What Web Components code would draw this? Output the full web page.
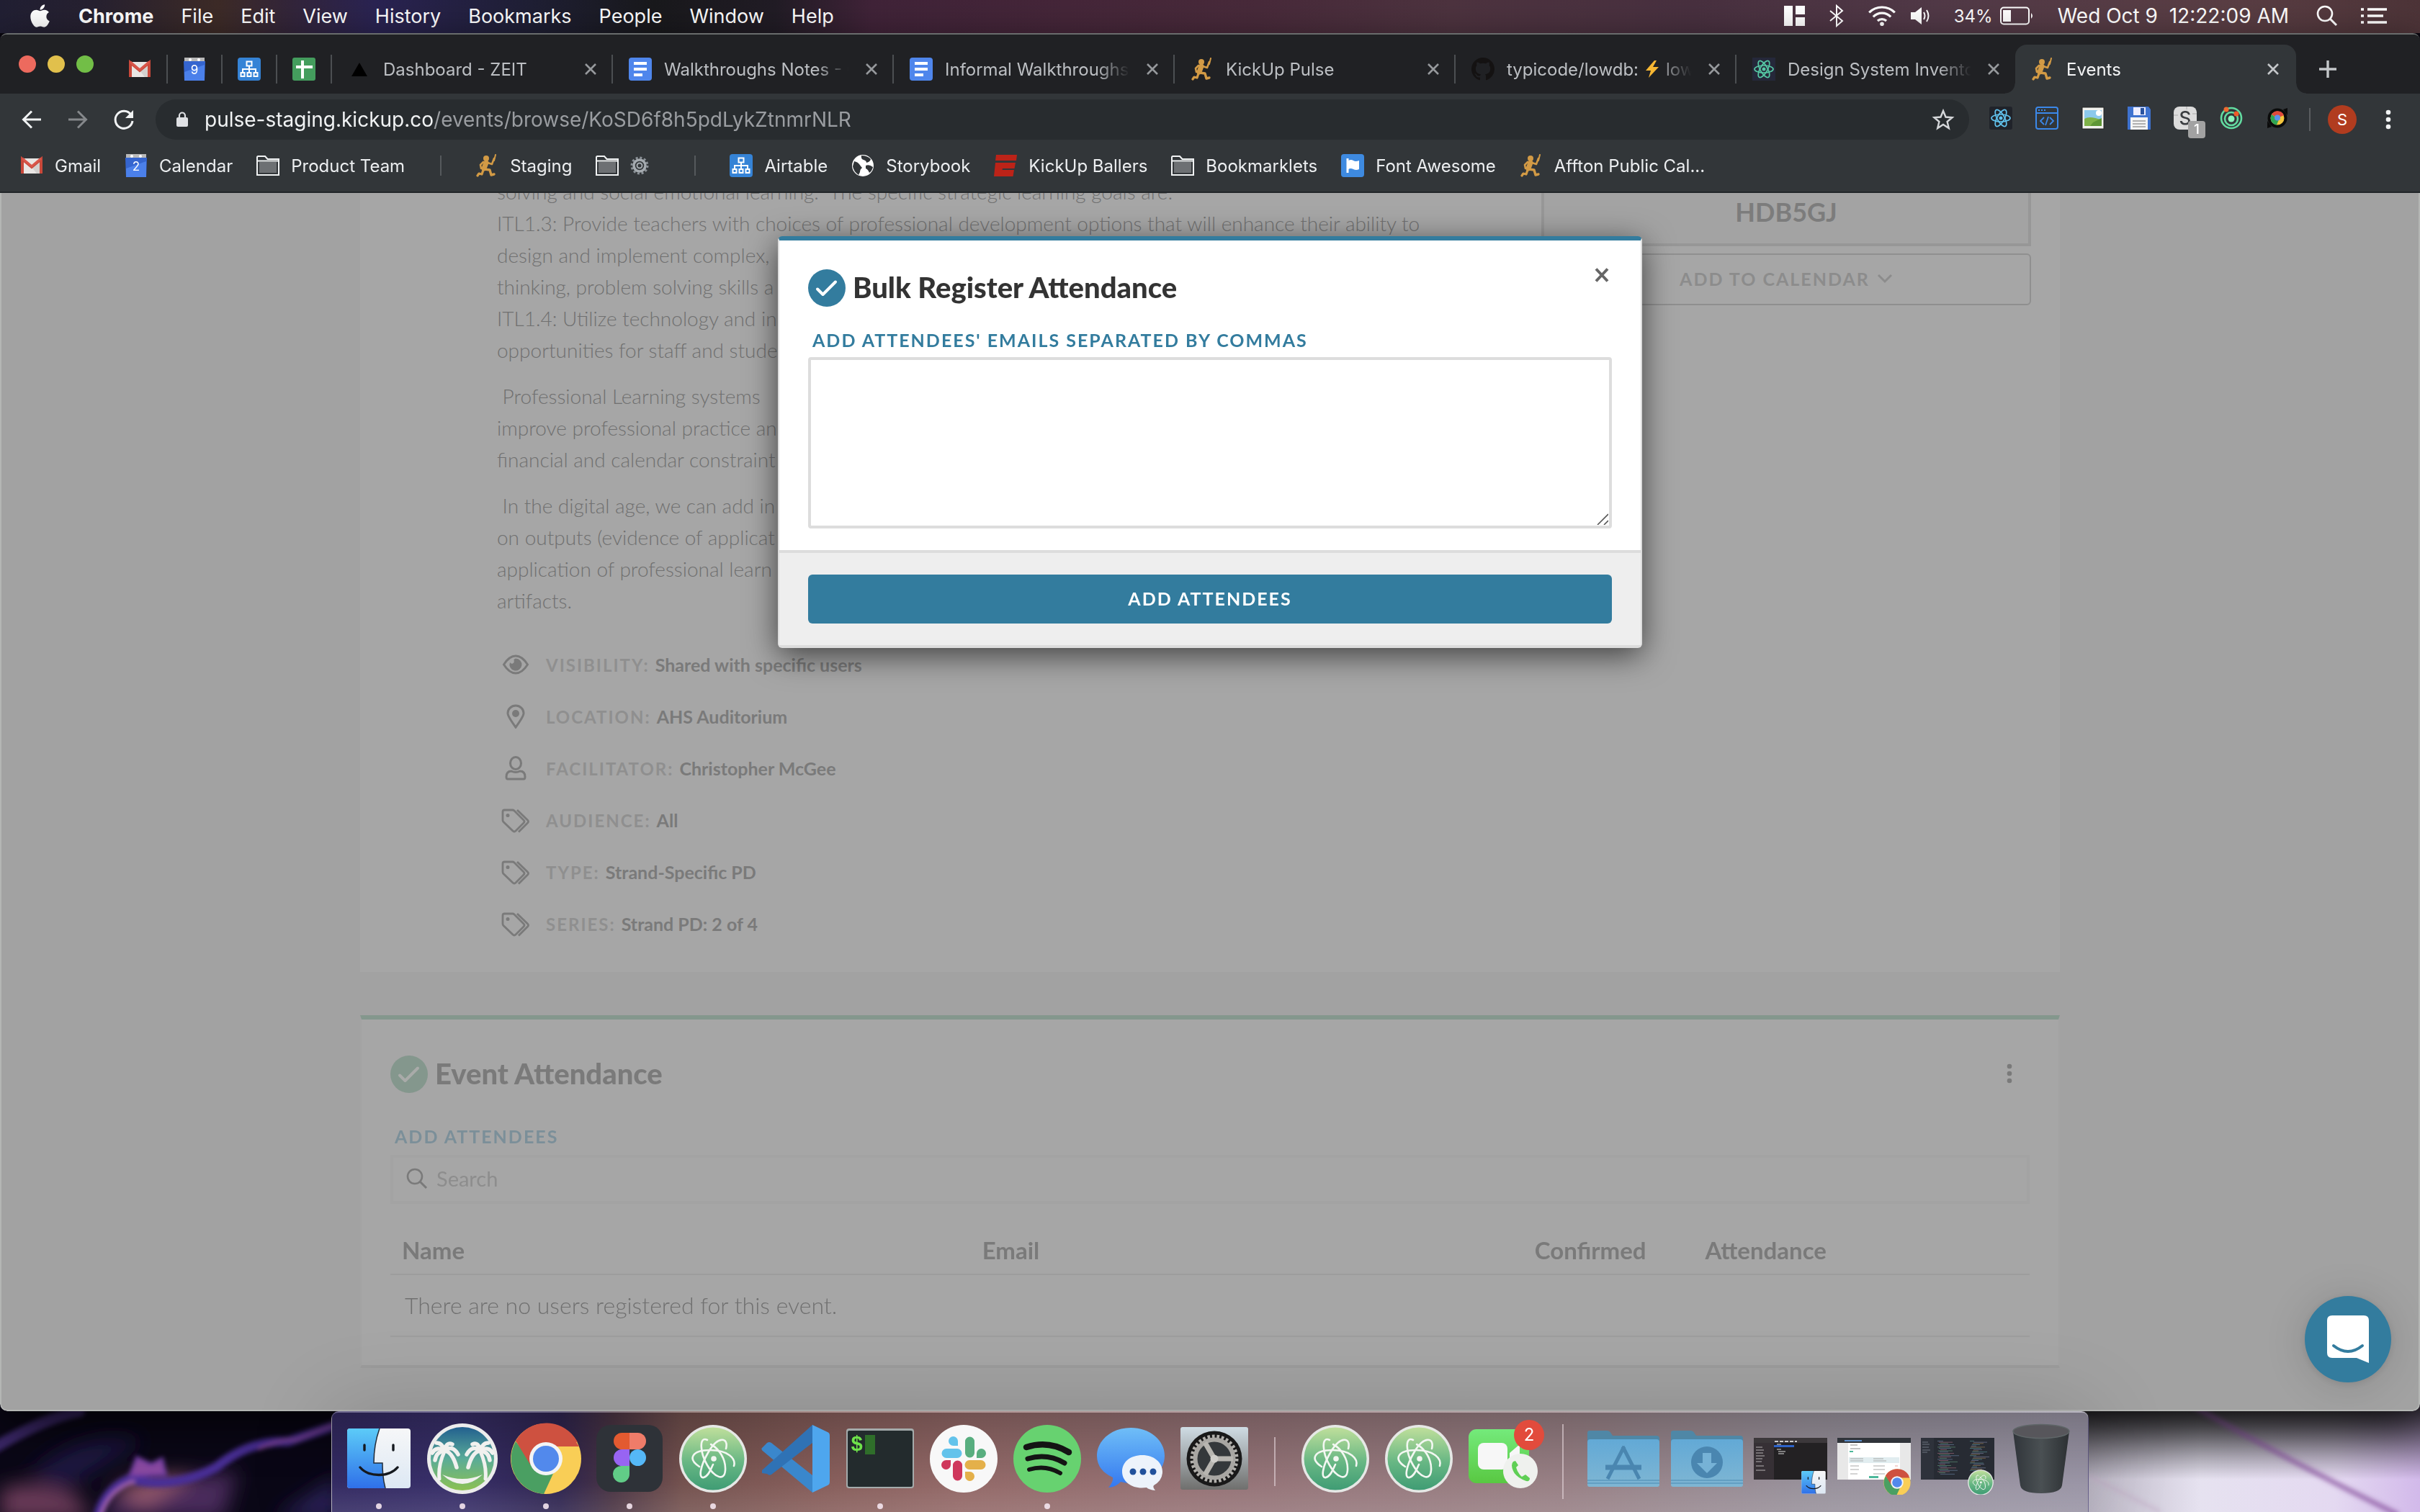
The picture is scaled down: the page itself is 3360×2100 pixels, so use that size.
<!DOCTYPE html>
<html lang="en">
<head>
<meta charset="utf-8">
<title>Events</title>
<style>
  html, body { margin: 0; height: 100%; }
  body { background: #08060f; overflow: hidden; font-family: Inter, "Liberation Sans", sans-serif; }
</style>
</head>
<body>
<desktop-screen></desktop-screen>
<script>
const chromeLogo = `<circle cx="50" cy="50" r="49" fill="#f9ce56"/><path d="M50 50 8 26A49 49 0 0 1 92 27L96 33H50Z" fill="#ce5140"/><path d="M8 26A49 49 0 0 0 47 99L64 62 50 50 30 54Z" fill="#4a9f62"/><path d="M50 27H94A49 49 0 0 0 8 25L28 58Z" fill="#ce5140"/><circle cx="50" cy="50" r="23" fill="#f3f4f5"/><circle cx="50" cy="50" r="18" fill="#5289ec"/>`;
const atomLogo = `<defs><linearGradient id="at" x1="0" y1="0" x2="0" y2="1"><stop offset="0" stop-color="#bfdf9b"/><stop offset=".55" stop-color="#68b784"/><stop offset="1" stop-color="#3f9c74"/></linearGradient></defs><circle cx="50" cy="50" r="47" fill="#e6e8e6"/><circle cx="50" cy="50" r="43.500" fill="url(#at)"/><g fill="none" stroke="#f3f7f2" stroke-width="2.600" stroke-linecap="round"><path d="M31 61C14 50 21 38 46 38S82 50 79 60"/><path d="M42 24C30 18 32 42 42 59S66 82 67 66 58 36 47 30"/><path d="M68 36C72 20 57 18 44 40S30 78 37 76 47 64 50 58"/></g><circle cx="51" cy="50" r="3.800" fill="#f3f7f2"/>`;
const finderLogo = `<defs><linearGradient id="fa" x1="0" y1="0" x2="0" y2="1"><stop offset="0" stop-color="#5ccbf8"/><stop offset="1" stop-color="#2f70e9"/></linearGradient><linearGradient id="fb" x1="0" y1="0" x2="0" y2="1"><stop offset="0" stop-color="#f6f7f8"/><stop offset="1" stop-color="#dde8f4"/></linearGradient></defs><rect x="6" y="8" width="88" height="83" rx="4" fill="url(#fb)"/><path d="M10 8H51C46 22 43 40 43 56H55C55 70 56 80 59 91H10a4 4 0 0 1-4-4V12a4 4 0 0 1 4-4Z" fill="url(#fa)"/><path d="M51 8C46 22 43 40 43 56H55C55 70 56 80 59 91M30 31v6M70 31v6" fill="none" stroke="#222d3a" stroke-width="1.500"/><path d="M30 31v7M70 31v7M24 62C36 76 64 76 76 62" fill="none" stroke="#15191f" stroke-width="3.400" stroke-linecap="round"/>`;
const reactShape = c => `<g fill="none" stroke="${c}" stroke-width="1.700"><ellipse cx="16" cy="16" rx="13" ry="5"/><ellipse cx="16" cy="16" rx="13" ry="5" transform="rotate(60 16 16)"/><ellipse cx="16" cy="16" rx="13" ry="5" transform="rotate(120 16 16)"/></g><circle cx="16" cy="16" r="2.500" fill="${c}"/>`;
const calendarShape = n => `<rect x="1" y="0" width="28" height="7" fill="#b9b9b9"/><circle cx="9" cy="3" r="2" fill="#fff"/><circle cx="21" cy="3" r="2" fill="#fff"/><path d="M0 5H30L29 32H1Z" fill="#3565cf"/><path d="M1 20 29 10V32H1Z" fill="#4b80ea"/><text x="15" y="23" font-size="17" fill="#fff" text-anchor="middle" font-family="Inter, sans-serif">${n}</text>`;
const folderShape = `<path d="M1 5V3.500Q1 2 2.500 2H12L15.500 6H31V28H1Z" fill="none" stroke="#f1f3f4" stroke-width="2"/><rect x="4" y="10" width="24" height="15" fill="#6d7073"/><path d="M1 8.500H31" stroke="#f1f3f4" stroke-width="2"/>`;
const runnerShape = `<g fill="none" stroke="#d29a45" stroke-linecap="round" stroke-linejoin="round"><path d="M15 12 12 20" stroke-width="7"/><path d="M17 12 23 14 26 6" stroke-width="2.600"/><path d="M26 9 28 1" stroke-width="2"/><path d="M11 11 7 15 8 20" stroke-width="2.600"/><path d="M13 21 20 22 22 29 26 28" stroke-width="3.400"/><path d="M11 22 9 28 5 27 3 30" stroke-width="3.200"/></g><circle cx="15" cy="6" r="4" fill="#d29a45"/>`;
const treeShape = `<rect width="32" height="32" rx="4" fill="#3583d6"/><g fill="none" stroke="#fff" stroke-width="2"><rect x="12.500" y="5.500" width="7" height="6"/><path d="M16 12V20M7 21V16H25V21"/><rect x="4.500" y="21" width="5" height="5"/><rect x="13.500" y="21" width="5" height="5"/><rect x="22.500" y="21" width="5" height="5"/></g>`;
const docShape = `<rect width="32" height="32" rx="4" fill="#4f86ec"/><path d="M7 8H25M7 16H25M7 24H19" stroke="#fff" stroke-width="4"/>`;
const gmailShape = `<path d="M2 6H28V27H2Z" fill="#e9e6e4"/><path d="M15 18 28 7V27H22Z" fill="#d3d0ce"/><path d="M2 27V7L15 18 28 7V27" fill="none" stroke="#c9483a" stroke-width="4"/><path d="M2 6 15 17 28 6" fill="none" stroke="#d9564a" stroke-width="3"/>`;
const folderBig = g => `<defs><linearGradient id="fo" x1="0" y1="0" x2="0" y2="1"><stop offset="0" stop-color="#62a9d6"/><stop offset="1" stop-color="#7fb6d3"/></linearGradient></defs><path d="M0 14Q0 11 3 11H27Q31 11 33 15L35 18H96Q100 18 100 22V40H0Z" fill="#4f87a6"/><path d="M0 27Q0 23 4 23H96Q100 23 100 27V86Q100 89 97 89H3Q0 89 0 86Z" fill="url(#fo)"/><path d="M0 80H100M0 84H100" stroke="#5b98bd" stroke-width="1.500"/>${g}`;
const tagShape = `<path d="M3 6.500Q3 4 5.500 4H16.500Q18 4 19 5L32 18Q34 20 32 22L21 33Q19 35 17 33L4 20.500Q3 19.500 3 18Z"/><path d="M23 4 37.500 18Q39.500 20 37.500 22L25 34.500"/><circle cx="10" cy="11.500" r="2.500" fill="currentColor" stroke="none"/>`;
const checkDisc = `<circle cx="26" cy="26" r="26" fill="currentColor"/><path d="M13 27.500 20.500 35 38 17.500" fill="none" stroke="var(--tick, #fff)" stroke-width="4" stroke-linecap="round" stroke-linejoin="round"/>`;
const crossShape = `<path d="M2 2 16 16M16 2 2 16" stroke="currentColor" stroke-width="2.600" fill="none"/>`;
const codeLines = (() => { let s = ''; for (let r = 0; r < 28; r++) { const y = 25 + r * 1.7; s += `<rect x="${23 + (r * 7) % 5}" y="${y}" width="${8 + (r * 11) % 19}" height=".8" fill="${['#5b6f8a', '#8a5c6c', '#56806b'][r % 3]}"/><rect x="${68 + (r * 5) % 6}" y="${y}" width="${6 + (r * 13) % 17}" height=".8" fill="${['#4f7d84', '#6b6f8a', '#86704f'][r % 3]}"/>`; } return s; })();

/* name: [viewBox width, viewBox height, content] */
const ICONS = {
  apple: [384, 512, `<path fill="#fff" d="M318.7 268.7c-.2-36.7 16.4-64.4 50-84.8-18.8-26.9-47.2-41.7-84.7-44.6-35.5-2.8-74.3 20.7-88.5 20.7-15 0-49.4-19.7-76.4-19.7C63.3 141.200 4 184.800 4 273.500q0 39.300 14.400 81.200c12.800 36.700 59 126.700 107.200 125.200 25.200-.6 43-17.900 75.800-17.900 31.800 0 48.300 17.900 76.400 17.900 48.600-.7 90.400-82.500 102.600-119.300-65.200-30.700-61.700-90-61.700-91.900zm-56.600-164.200c27.300-32.400 24.800-61.900 24-72.500-24.100 1.400-52 16.400-67.900 34.900-17.500 19.800-27.800 44.300-25.600 71.900 26.100 2 49.900-11.400 69.500-34.300z"/>`],
  magnet: [30, 28, `<path fill="#fff" d="M0 0H12V28H0ZM16 0H29V12H16ZM16 16H29V28H16Z"/>`],
  bluetooth: [22, 32, `<path d="M2 9 19 23 11 30V2L19 9 2 23" fill="none" stroke="#fff" stroke-width="2"/>`],
  wifi: [42, 32, `<g fill="none" stroke="#fff" stroke-width="3.400"><path d="M2 11A27 27 0 0 1 40 11"/><path d="M8 17.500A18 18 0 0 1 34 17.500"/><path d="M14.500 23.500A9.500 9.500 0 0 1 27.500 23.500"/></g><circle cx="21" cy="28" r="3" fill="#fff"/>`],
  speaker: [28, 28, `<path d="M0 9H6L15 2V26L6 19H0Z" fill="#fff"/><path d="M18 9Q21 14 18 19M22 6Q27 14 22 22" fill="none" stroke="#fff" stroke-width="2"/>`],
  battery: [48, 26, `<rect x="1" y="1.500" width="39" height="23" rx="4" fill="none" stroke="#fff" stroke-width="2"/><rect x="4" y="5" width="11" height="16" fill="#fff"/><path d="M43 9Q47 13 43 17Z" fill="#fff"/>`],
  lens: [30, 30, `<circle cx="12" cy="12" r="10" fill="none" stroke="currentColor" stroke-width="2.600"/><path d="M19 19 28 28" stroke="currentColor" stroke-width="3"/>`],
  list: [36, 22, `<path d="M0 2H4M0 11H4M0 20H4M9 2H36M9 11H31M9 20H36" stroke="#fff" stroke-width="3.600"/>`],
  gmail: [30, 32, gmailShape], cal9: [30, 32, calendarShape(9)], cal2: [30, 32, calendarShape(2)],
  tree: [32, 32, treeShape],
  sheet: [32, 32, `<rect width="32" height="32" rx="3" fill="#449d5d"/><path d="M14 4V29M5 13H28" stroke="#fff" stroke-width="4"/>`],
  zeit: [32, 32, `<path d="M16 7 27 26H5Z" fill="#000"/>`],
  doc: [32, 32, docShape], runner: [32, 32, runnerShape],
  github: [16, 16, `<path fill="#141212" fill-rule="evenodd" d="M8 0C3.580 0 0 3.580 0 8c0 3.540 2.290 6.530 5.470 7.590.4.07.55-.17.55-.38 0-.19-.01-.82-.01-1.490-2.010.37-2.530-.49-2.690-.94-.09-.23-.48-.94-.82-1.130-.28-.15-.68-.52-.01-.53.63-.01 1.080.58 1.230.82.72 1.210 1.870.87 2.330.66.07-.52.28-.87.51-1.070-1.780-.2-3.640-.89-3.640-3.950 0-.87.31-1.590.82-2.150-.08-.2-.36-1.020.08-2.120 0 0 .67-.21 2.200.82.64-.18 1.320-.27 2-.27s1.360.09 2 .27c1.530-1.040 2.200-.82 2.200-.82.44 1.100.16 1.920.08 2.120.51.56.82 1.270.82 2.150 0 3.070-1.870 3.750-3.650 3.950.29.25.54.73.54 1.480 0 1.070-.01 1.930-.01 2.200 0 .21.15.46.55.38A8.010 8.010 0 0 0 16 8c0-4.420-3.580-8-8-8z"/>`],
  bolt: [18, 24, `<path d="M12 0 0 14H7L4 24 18 9H10L15 0Z" fill="#f7b733"/>`],
  reactGreen: [32, 32, `<rect width="32" height="32" fill="#25283a"/>${reactShape('#56c9a5')}`],
  reactBlue: [32, 32, `<rect width="32" height="32" rx="3" fill="#20232a"/>${reactShape('#61c3ee')}`],
  cross: [18, 18, crossShape],
  dismiss: [20, 20, `<path d="M2 1.500 18 18.500M18 1.500 2 18.500" stroke="currentColor" stroke-width="4" fill="none"/>`],
  plus: [26, 26, `<path d="M13 1V25M1 13H25" stroke="#c4c7ca" stroke-width="3.400"/>`],
  back: [32, 32, `<path d="M29 16H5M16 4.500 4.500 16 16 27.500" fill="none" stroke="currentColor" stroke-width="3"/>`],
  forward: [32, 32, `<path d="M3 16H27M16 4.500 27.500 16 16 27.500" fill="none" stroke="currentColor" stroke-width="3"/>`],
  reload: [32, 32, `<path d="M26 9.500A12 12 0 1 0 28 18" fill="none" stroke="#f1f3f4" stroke-width="3"/><path d="M29 3V14H18Z" fill="#f1f3f4"/>`],
  lock: [18, 22, `<rect x="1" y="8" width="16" height="13" rx="2" fill="#dfe1e4"/><path d="M5 9V5.500A4 4 0 0 1 13 5.500V9" fill="none" stroke="#dfe1e4" stroke-width="2.200"/>`],
  star: [32, 32, `<path d="M16 4 19.500 12.500 28.500 13.200 21.600 19 23.800 28 16 23 8.200 28 10.400 19 3.500 13.200 12.500 12.500Z" fill="none" stroke="#d5d7da" stroke-width="2.400"/>`],
  devwin: [32, 32, `<rect x="1" y="1" width="30" height="30" rx="3" fill="none" stroke="#3b88ea" stroke-width="2"/><path d="M1 9H31M4 5H6M8 5H10M12 5H14M12 15 7 20 12 25M20 15 25 20 20 25M18 14 14 26" fill="none" stroke="#3b88ea" stroke-width="1.800"/>`],
  photo: [32, 32, `<rect x="1" y="1" width="30" height="30" fill="#f2f2ee" stroke="#222"/><rect x="4" y="5" width="24" height="22" fill="#8cc9ec"/><path d="M4 17Q12 12 28 19V27H4Z" fill="#7fb249"/><path d="M16 22 28 16V27H12Z" fill="#5e9636"/><circle cx="24" cy="9" r="4" fill="#fff"/>`],
  floppy: [32, 32, `<path d="M0 0H29L32 4V32H0Z" fill="#3e72cf"/><rect x="8" y="1" width="17" height="11" fill="#eef"/><rect x="18" y="2" width="5" height="9" fill="#2852a0"/><rect x="4" y="15" width="24" height="17" fill="#f4f4f4"/><path d="M7 20H25M7 24H25M7 28H25" stroke="#999" stroke-width="1.600"/>`],
  pageS: [32, 32, `<rect width="32" height="32" rx="8" fill="#dcdcdc"/><path d="M0 12H6M26 10H32M18 0V4" stroke="#aaa"/><text x="16" y="25" text-anchor="middle" font-size="26" font-weight="500" font-family="Inter, sans-serif" fill="#3a3d40">S</text>`],
  orbit: [32, 32, `<g fill="none" stroke="#62dba0" stroke-width="2.600"><circle cx="16" cy="16" r="14"/><circle cx="16" cy="17" r="9"/></g><circle cx="16" cy="17" r="4.500" fill="#8af5bd"/><circle cx="9" cy="4" r="3.500" fill="#ee6a30"/><circle cx="23" cy="10" r="3.500" fill="#ee5a28"/>`],
  chromeSync: [32, 32, `<circle cx="16" cy="16" r="13.500" fill="#0b0b0b"/><path d="M24 4 30 2V12ZM8 28 2 30V20Z" fill="#0b0b0b"/><circle cx="16" cy="16" r="9.500" fill="#f4c63d"/><path d="M16 16 8 11A9.500 9.500 0 0 1 25 12Z" fill="#df4a3c"/><path d="M8 11A9.500 9.500 0 0 0 15 25.500L18 18Z" fill="#2fa653"/><circle cx="16" cy="15.500" r="4" fill="#5b92ec"/>`],
  dots: [8, 32, `<g fill="currentColor"><circle cx="4" cy="6" r="3.300"/><circle cx="4" cy="16" r="3.300"/><circle cx="4" cy="26" r="3.300"/></g>`],
  folder: [32, 30, folderShape],
  gear: [26, 26, `<circle cx="13" cy="13" r="11" fill="none" stroke="#8b9197" stroke-width="3" stroke-dasharray="3 2.760"/><circle cx="13" cy="13" r="8" fill="none" stroke="#a5abb0" stroke-width="3.500"/><circle cx="13" cy="13" r="3.500" fill="none" stroke="#a5abb0" stroke-width="2"/>`],
  rule: [32, 32, `<path d="M17 2V30" stroke="#55595c" stroke-width="2"/>`],
  globe: [32, 32, `<circle cx="16" cy="16" r="15" fill="#fff"/><path d="M4 10Q9 11 11 14T15 19Q12 21 12 25L10 29Q3 24 2 17Z" fill="#303437"/><path d="M14 2Q13 7 17 8T21 12Q26 11 27 7Q22 2 14 2ZM20 16Q25 14 30 18Q29 23 25 26Q23 21 20 20Z" fill="#303437"/>`],
  espn: [32, 32, `<path d="M3 1H32L31 9H2ZM2 12H30L28.500 20H12L11.500 22H28L26.500 31H0Z" fill="#bc2318"/>`],
  flag: [32, 32, `<rect width="32" height="32" rx="4" fill="#3e8ae0"/><path d="M9 6V26" stroke="#fff" stroke-width="3"/><path d="M10 9Q14 7 17 9T25 9V21Q21 23 17 21T10 21Z" fill="#fff"/>`],
  eye: [38, 28, `<g fill="none" stroke="currentColor" stroke-width="3"><path d="M2.500 14Q10 2 19 2T35.500 14Q28 26 19 26T2.500 14Z"/></g><path d="M19 5.500A8.500 8.500 0 1 1 11 11Q12.500 13.500 15 12.500T16.500 7Q17 6 19 5.500Z" fill="currentColor"/>`],
  pin: [26, 34, `<path d="M13 32Q2 17 2 12.500A11 10.500 0 0 1 24 12.500Q24 17 13 32Z" fill="none" stroke="currentColor" stroke-width="3"/><circle cx="13" cy="13" r="5" fill="currentColor"/>`],
  person: [30, 34, `<g fill="none" stroke="currentColor" stroke-width="3"><ellipse cx="15" cy="10" rx="7.500" ry="8.500"/><path d="M2 29Q2 21 9 21Q15 24 21 21Q28 21 28 29Q28 32 26 32H4Q2 32 2 29Z"/></g>`],
  tags: [42, 36, `<g fill="none" stroke="currentColor" stroke-width="2.800">${tagShape}</g>`],
  disc: [52, 52, checkDisc],
  chevron: [22, 14, `<path d="M2 2 11 11 20 2" fill="none" stroke="currentColor" stroke-width="3"/>`],
  grip: [16, 16, `<path d="M1 16 16 1M10 16 16 10" stroke="#555" stroke-width="1.600"/>`],
  chat: [58, 66, `<path d="M7 0H51Q58 0 58 7V66L41 59H7Q0 59 0 52V7Q0 0 7 0Z" fill="#fff"/><path d="M9 42Q29 58 49 42" fill="none" stroke="#337c9e" stroke-width="4" stroke-linecap="round"/>`],
  finder: [100, 100, finderLogo],
  palms: [100, 100, `<defs><linearGradient id="pl" x1="0" y1="0" x2="0" y2="1"><stop offset="0" stop-color="#22608f"/><stop offset=".5" stop-color="#5aab98"/><stop offset="1" stop-color="#8cc152"/></linearGradient></defs><circle cx="50" cy="50" r="49" fill="#ececec"/><circle cx="50" cy="50" r="44" fill="url(#pl)"/><g fill="none" stroke="#f1f1ef" stroke-linecap="round"><path d="M25 40Q16 60 18 78M75 40Q84 60 82 78" stroke-width="5"/><path d="M25 39Q14 32 8 42M25 39Q14 40 12 52M25 39Q22 28 14 28M25 39Q36 30 44 44M25 39Q36 40 42 62M25 39Q28 26 36 30M75 39Q86 32 92 42M75 39Q86 40 88 52M75 39Q78 28 86 28M75 39Q64 30 56 44M75 39Q64 40 58 62M75 39Q72 26 64 30" stroke-width="5.500"/></g><path d="M22 72Q50 98 78 72Q50 84 22 72Z" fill="#f1f1ef"/>`],
  chrome: [100, 100, chromeLogo],
  figma: [100, 100, `<rect x="4" y="3" width="92" height="93" rx="20" fill="#2e3238"/><path d="M39.500 14H50V37H39.500a11.500 11.500 0 0 1 0-23Z" fill="#e35a30"/><path d="M50 14H61.500a11.500 11.500 0 0 1 0 23H50Z" fill="#ef7c69"/><path d="M39.500 37H50V60H39.500a11.500 11.500 0 0 1 0-23Z" fill="#9864f2"/><circle cx="61.500" cy="48.500" r="11.500" fill="#55b8f7"/><path d="M39.500 60H50V71.500A11.500 11.500 0 1 1 39.500 60Z" fill="#61cc87"/>`],
  atom: [100, 100, atomLogo],
  vscode: [100, 100, `<path d="M2 35 9 28Q12 26 15 28L72 73V97L4 40Q0 37 2 35Z" fill="#3a87cc"/><path d="M2 66 72 3V28L15 72Q12 74 9 71L2 70Z" fill="#2f72b5"/><path d="M72 3 93 13Q96 14 96 18V82Q96 86 93 87L72 97V3Z" fill="#4ea6ee"/>`],
  terminal: [100, 100, `<rect x="3" y="8" width="94" height="83" rx="4" fill="#a4abab"/><rect x="5" y="11" width="90" height="78" rx="2" fill="#232b2d"/><text x="9" y="39" font-size="29" font-weight="700" font-family="'Liberation Mono', monospace" fill="#6ee34a">$</text><rect x="29" y="17" width="14" height="27" fill="#2f6e2a"/>`],
  slack: [100, 100, `<circle cx="50" cy="50" r="47" fill="#f8f8f8"/><path d="M42 32H35.500a6.500 6.500 0 1 1 6.500-6.500ZM26 36H41a6.500 6.500 0 0 1 0 13H26a6.500 6.500 0 0 1 0-13Z" fill="#63c3eb"/><path d="M52 26a6.500 6.500 0 0 1 13 0V42a6.500 6.500 0 0 1-13 0ZM68 49V42.500a6.500 6.500 0 1 1 6.500 6.500Z" fill="#58ae7f"/><path d="M58 52H74a6.500 6.500 0 0 1 0 13H58a6.500 6.500 0 0 1 0-13ZM52 68H58.500a6.500 6.500 0 1 1-6.500 6.500Z" fill="#e4b04a"/><path d="M35 59a6.500 6.500 0 0 1 13 0V74a6.500 6.500 0 0 1-13 0ZM32 52V58.500a6.500 6.500 0 1 1-6.500-6.500Z" fill="#cf375c"/>`],
  spotify: [100, 100, `<circle cx="50" cy="50" r="47" fill="#67d270"/><g fill="none" stroke="#141414" stroke-linecap="round"><path d="M21 34Q52 24 80 41" stroke-width="8.500"/><path d="M23 50Q50 42 74 56" stroke-width="7"/><path d="M25 65Q48 58 68 70" stroke-width="6"/></g>`],
  messages: [100, 100, `<defs><linearGradient id="ms" x1="0" y1="0" x2="0" y2="1"><stop offset="0" stop-color="#6fbef7"/><stop offset="1" stop-color="#3478f0"/></linearGradient></defs><path d="M50 7C76 7 97 24 97 46S76 84 50 84Q42 84 36 82Q30 89 19 90Q26 82 25 76Q3 66 3 46C3 24 24 7 50 7Z" fill="url(#ms)"/><path d="M66 45C82 45 94 55 94 68Q94 80 82 87Q80 90 84 94Q75 93 72 90C52 93 38 82 38 68S50 45 66 45Z" fill="#edf3fb"/><g fill="#21519c"><circle cx="53" cy="68" r="4.500"/><circle cx="67" cy="68" r="4.500"/><circle cx="81" cy="68" r="4.500"/></g>`],
  prefs: [100, 100, `<defs><linearGradient id="pf" x1="0" y1="0" x2="0" y2="1"><stop offset="0" stop-color="#cfdce4"/><stop offset="1" stop-color="#6f6f6d"/></linearGradient></defs><rect x="3" y="6" width="94" height="87" rx="3" fill="url(#pf)"/><circle cx="50" cy="50" r="38.500" fill="#191919"/><circle cx="50" cy="50" r="31" fill="none" stroke="#b2b0ac" stroke-width="5" stroke-dasharray="3.600 2.890"/><circle cx="50" cy="50" r="26.500" fill="#34383b" stroke="#a8a6a2" stroke-width="6"/><path d="M50 50H76M50 50 37 27.500M50 50 37 72.500" stroke="#b7b5b0" stroke-width="7"/><circle cx="50" cy="50" r="5.500" fill="#cfcdc9"/>`],
  facetime: [100, 100, `<defs><linearGradient id="ft" x1="0" y1="0" x2="0" y2="1"><stop offset="0" stop-color="#74ea7b"/><stop offset="1" stop-color="#59c842"/></linearGradient></defs><rect x="3" y="9" width="84" height="75" rx="11" fill="url(#ft)"/><rect x="16" y="28" width="41" height="37" rx="8" fill="#f7f7f7"/><path d="M60 42 74 30V64L60 52Z" fill="#f7f7f7"/><circle cx="75" cy="67" r="24" fill="#eff1ee"/><path d="M65 54Q61 58 65 67T83 81Q88 82 88 77L82 72 77 75Q71 70 69 62L72 59 68 53Z" fill="#5fcf55"/>`],
  folderApps: [100, 100, folderBig(`<g stroke="#4a86b0" fill="none"><path d="M51 33 28 78M49 33 72 78" stroke-width="5"/><path d="M25 62H75" stroke-width="7"/></g>`)],
  folderDown: [100, 100, folderBig(`<circle cx="50" cy="55" r="22" fill="#4a86b0"/><path d="M44 42H56V56H64L50 70 36 56H44Z" fill="#76b2d6"/>`)],
  thumbFinder: [102, 100, `<rect y="21" width="102" height="58" fill="#232123"/><rect y="21" width="28" height="58" fill="#363035"/><rect y="21" width="102" height="7" fill="#3c383b"/><path d="M29 26H60" stroke="#ccc" stroke-width="2" stroke-dasharray="5 2"/><path d="M3 34H12M3 38H14M3 42H13M3 46H15M3 50H12M3 54H11M3 60H14M3 66H16" stroke="#b5b1b4"/><rect x="28" y="31" width="28" height="3" fill="#2e63c9"/><path d="M32 30H38M32 37H38M34 40H44M34 43H42" stroke="#ddd"/><g transform="translate(64 64) scale(.38)">${finderLogo}</g>`],
  thumbChrome: [102, 100, `<rect y="21" width="102" height="58" fill="#e8e8e8"/><rect y="21" width="102" height="7" fill="#30343a"/><path d="M10 25H34" stroke="#5b8dc9" stroke-width="2"/><rect x="15" y="28" width="72" height="51" fill="#fff"/><path d="M18 31H28M18 36H32" stroke="#888"/><rect x="17" y="39" width="5" height="2" fill="#4db89b"/><rect x="16" y="48" width="70" height="8" fill="#e1edf0"/><path d="M18 50H36M50 50H64M18 53H36M50 53H68M18 60H30M50 60H66M18 65H30M50 65H66M18 71H28M50 71H66" stroke="#a9a9a9"/><path d="M80 60H84M80 65H84M80 71H84" stroke="#e8a49c"/><rect x="44" y="74" width="13" height="3" fill="#4db89b"/><g transform="translate(64 64) scale(.38)">${chromeLogo}</g>`],
  thumbAtom: [102, 100, `<rect y="21" width="102" height="58" fill="#272b33"/><rect y="21" width="18" height="58" fill="#2e323b"/><path d="M2 27H10M2 30H12M2 34H11M2 38H13M2 41H9" stroke="#6c7480"/>${codeLines}<g transform="translate(64 64) scale(.38)">${atomLogo}</g>`],
  trash: [100, 100, `<defs><linearGradient id="tr"><stop offset="0" stop-color="#30353a"/><stop offset=".5" stop-color="#4a5053"/><stop offset="1" stop-color="#2c3033"/></linearGradient></defs><path d="M11 12 21 87Q23 98 50 98T79 87L89 12Z" fill="url(#tr)"/><ellipse cx="50" cy="12" rx="39" ry="9.500" fill="#57565b" stroke="#5f6668" stroke-width="1.500"/>`]
};

function define(tag, html, setup) {
  const template = document.createElement('template');
  template.innerHTML = html;
  customElements.define(tag, class extends HTMLElement {
    connectedCallback() {
      if (this.shadowRoot) return;
      this.attachShadow({ mode: 'open' }).append(template.content.cloneNode(true));
      if (setup) setup(this, this.shadowRoot);
    }
  });
}

define('ui-icon', `<style>:host{display:inline-flex;flex:none}svg{display:block}</style>`, (el, root) => {
  const [w, h, body] = ICONS[el.getAttribute('name')];
  const width = Number(el.getAttribute('size') || w);
  root.innerHTML += `<svg aria-hidden="true" width="${width}" height="${Math.round(width * h / w)}" viewBox="0 0 ${w} ${h}">${body}</svg>`;
});

define('mac-menubar', `
<style>
  :host{display:flex;align-items:center;justify-content:space-between;height:46px;box-sizing:border-box;padding:0 46px 2px 42px;color:#fff;font-size:27px;
    background:linear-gradient(90deg,#211f33 0,#272130 4%,#3d2b27 9%,#33253a 12%,#2a2352 15.500%,#1f1f34 22%,#19191c 27%,#211c25 32%,#402338 36%,#452639 44%,#482a3a 52%,#4d333f 60%,#48303f 70%,#513947 80%,#5a3e44 92%,#4d3438 100%)}
  nav,.status{display:flex;align-items:center}
  nav{gap:38px}
  nav ui-icon{margin-right:2px}
  button{all:unset;white-space:pre}
  .app{font-weight:700}
  .status{gap:32px}
  .wifi{margin-right:-12px}
  .power{display:flex;align-items:center;gap:10px;font-size:24px}
  .clock{margin-right:6px;font-size:28px}
</style>
<nav><ui-icon name="apple" size="27"></ui-icon><button class="app">Chrome</button><button>File</button><button>Edit</button><button>View</button><button>History</button><button>Bookmarks</button><button>People</button><button>Window</button><button>Help</button></nav>
<div class="status"><ui-icon name="magnet"></ui-icon><ui-icon name="bluetooth"></ui-icon><ui-icon class="wifi" name="wifi" size="40"></ui-icon><ui-icon name="speaker"></ui-icon><span class="power">34%<ui-icon name="battery"></ui-icon></span><button class="clock">Wed Oct 9  12:22:09 AM</button><ui-icon name="lens"></ui-icon><ui-icon name="list"></ui-icon></div>`);

define('pinned-tab', `
<style>
  :host{display:flex;align-items:center;width:76px;height:68px}
  button{all:unset;flex:1;display:flex;justify-content:center}
  i{width:2px;height:40px;background:#4c4f52}
</style><button><slot></slot></button><i></i>`, (el, root) => root.querySelector('button').setAttribute('aria-label', el.getAttribute('label')));

define('browser-tab', `
<style>
  :host{display:flex;align-items:center;position:relative;flex:0 1 390px;min-width:0;height:68px;box-sizing:border-box;padding:0 0 0 22px;color:#bcbfc3;font-size:24px}
  .title{all:unset;flex:1;min-width:0;margin:0 17px;overflow:hidden;white-space:nowrap;display:flex;align-items:center;gap:10px}
  :host([fade]) .title{-webkit-mask-image:linear-gradient(90deg,#000 80%,transparent 98%)}
  .close{all:unset;display:flex;color:#96999c;margin-right:20px}
  i{width:2px;height:40px;background:#4c4f52}
  :host([last]) i{display:none}
  :host([active]){background:#323639;color:#f4f5f6;border-radius:16px 16px 0 0;margin-left:-3px}
  :host([active]) i{display:none}
  :host([last]) .close{margin-right:24px}
  :host([active]) .close{color:#c4c7ca;margin-right:23px}
  :host([active])::before,:host([active])::after{content:"";position:absolute;bottom:0;width:14px;height:14px}
  :host([active])::before{right:100%;background:radial-gradient(circle at 0 0,transparent 13px,#323639 14px)}
  :host([active])::after{left:100%;background:radial-gradient(circle at 100% 0,transparent 13px,#323639 14px)}
</style><slot name="icon"></slot><button class="title"><slot></slot></button><button class="close" aria-label="Close tab"><ui-icon name="cross"></ui-icon></button><i></i>`);

define('tab-strip', `
<style>
  :host{display:flex;align-items:flex-end;height:82px;background:#202124;padding-left:26px}
  .lights{display:flex;gap:16px;align-self:center;margin-right:27px}
  .lights button{all:unset;width:24px;height:24px;border-radius:50%}
  .r{background:#ed6a5e!important}.y{background:#e1c04c!important}.g{background:#72be47!important}
  .new{all:unset;display:flex;align-items:center;height:68px;margin-left:31px}
</style>
<div class="lights"><button class="r" aria-label="Close"></button><button class="y" aria-label="Minimise"></button><button class="g" aria-label="Zoom"></button></div>
<pinned-tab label="Gmail"><ui-icon name="gmail"></ui-icon></pinned-tab>
<pinned-tab label="Calendar"><ui-icon name="cal9"></ui-icon></pinned-tab>
<pinned-tab label="Airtable"><ui-icon name="tree"></ui-icon></pinned-tab>
<pinned-tab label="Sheets"><ui-icon name="sheet"></ui-icon></pinned-tab>
<browser-tab><ui-icon slot="icon" name="zeit"></ui-icon>Dashboard - ZEIT</browser-tab>
<browser-tab fade><ui-icon slot="icon" name="doc"></ui-icon>Walkthroughs Notes - G</browser-tab>
<browser-tab fade><ui-icon slot="icon" name="doc"></ui-icon>Informal Walkthroughs</browser-tab>
<browser-tab><ui-icon slot="icon" name="runner"></ui-icon>KickUp Pulse</browser-tab>
<browser-tab fade><ui-icon slot="icon" name="github" size="32"></ui-icon>typicode/lowdb: <ui-icon name="bolt"></ui-icon> low</browser-tab>
<browser-tab fade last><ui-icon slot="icon" name="reactGreen"></ui-icon>Design System Invento</browser-tab>
<browser-tab active><ui-icon slot="icon" name="runner"></ui-icon>Events</browser-tab>
<button class="new" aria-label="New tab"><ui-icon name="plus"></ui-icon></button>`);

define('address-bar', `
<style>
  :host{display:flex;align-items:center;height:72px;background:#323639;padding:0 28px;color:#f1f3f4}
  button{all:unset;display:flex;justify-content:center}
  .nav{display:flex;gap:32px;margin-right:28px}
  .off{color:#85888b}
  .omnibox{flex:1;display:flex;align-items:center;height:56px;border-radius:28px;background:#282c2f;padding:0 20px 0 28px}
  .url{flex:1;margin-left:22px;font-size:28px;white-space:nowrap;outline:none}
  .path{color:#9a9da1}
  .ext{display:flex;gap:32px;margin-left:28px}
  .count{position:relative}
  .count b{position:absolute;left:20px;top:20px;width:24px;height:24px;border-radius:4px;background:#a2a2a2;color:#fff;font-size:19px;line-height:24px;text-align:center;font-weight:500}
  hr{width:2px;height:32px;border:0;background:#5a5d60;margin:0 24px 0 28px}
  .avatar{width:40px;height:40px;border-radius:50%;background:#b13c1f;color:#fff;font-size:22px;align-items:center;margin-right:28px}
  .more{width:32px}
</style>
<div class="nav"><button aria-label="Back"><ui-icon name="back"></ui-icon></button><button class="off" aria-label="Forward"><ui-icon name="forward"></ui-icon></button><button aria-label="Reload"><ui-icon name="reload"></ui-icon></button></div>
<div class="omnibox"><ui-icon name="lock"></ui-icon><div class="url" role="textbox" contenteditable="true" spellcheck="false" aria-label="Address">pulse-staging.kickup.co<span class="path">/events/browse/KoSD6f8h5pdLykZtnmrNLR</span></div><button aria-label="Bookmark"><ui-icon name="star"></ui-icon></button></div>
<div class="ext"><ui-icon name="reactBlue"></ui-icon><ui-icon name="devwin"></ui-icon><ui-icon name="photo"></ui-icon><ui-icon name="floppy"></ui-icon><span class="count"><ui-icon name="pageS"></ui-icon><b>1</b></span><ui-icon name="orbit"></ui-icon><ui-icon name="chromeSync"></ui-icon></div>
<hr><button class="avatar">S</button><button class="more" aria-label="Menu"><ui-icon name="dots"></ui-icon></button>`);

define('bookmark-link', `
<style>:host{display:block}a{display:flex;align-items:center;color:#eceef0;text-decoration:none;white-space:nowrap}span{display:flex;justify-content:center;width:32px;margin-right:16px}</style>
<a href="#"><span><slot name="icon"></slot></span><slot></slot></a>`);

define('bookmark-bar', `
<style>:host{display:flex;align-items:center;gap:33px;height:56px;background:#323639;padding:0 28px 8px;border-bottom:2px solid #222629;font-size:24px}.pad{margin-right:14px}</style>
<bookmark-link><ui-icon slot="icon" name="gmail"></ui-icon>Gmail</bookmark-link>
<bookmark-link><ui-icon slot="icon" name="cal2"></ui-icon>Calendar</bookmark-link>
<bookmark-link><ui-icon slot="icon" name="folder"></ui-icon>Product Team</bookmark-link>
<ui-icon name="rule"></ui-icon>
<bookmark-link><ui-icon slot="icon" name="runner"></ui-icon>Staging</bookmark-link>
<bookmark-link class="pad"><ui-icon slot="icon" name="folder"></ui-icon><ui-icon name="gear"></ui-icon></bookmark-link>
<ui-icon name="rule"></ui-icon>
<bookmark-link><ui-icon slot="icon" name="tree"></ui-icon>Airtable</bookmark-link>
<bookmark-link><ui-icon slot="icon" name="globe"></ui-icon>Storybook</bookmark-link>
<bookmark-link><ui-icon slot="icon" name="espn"></ui-icon>KickUp Ballers</bookmark-link>
<bookmark-link><ui-icon slot="icon" name="folder"></ui-icon>Bookmarklets</bookmark-link>
<bookmark-link><ui-icon slot="icon" name="flag"></ui-icon>Font Awesome</bookmark-link>
<bookmark-link><ui-icon slot="icon" name="runner"></ui-icon>Affton Public Cal...</bookmark-link>`);

define('meta-row', `
<style>
  :host{display:flex;align-items:center;height:48px;color:#7a7a7a;font-weight:700;font-size:25px}
  .icon{display:flex;justify-content:center;width:52px;margin-right:16px}
  dt{font-size:24px;letter-spacing:2px;color:#8f8f8f;margin-right:8px}
  dd{margin:0}
</style><span class="icon"><slot name="icon"></slot></span><dt><slot name="label"></slot></dt><dd><slot></slot></dd>`);

define('event-details', `
<style>
  :host{display:flex;justify-content:space-between;align-items:flex-start;box-sizing:border-box;background:#a6a6a6;padding:0 40px 43px 190px;border-bottom:4px solid #a2a2a2;color:#7a7a7a}
  article{font-size:28px;line-height:44px;font-weight:300;white-space:nowrap;color:#707070}
  p{margin:0 0 20px}
  dl{margin:43px 0 0;display:flex;flex-direction:column;gap:24px}
  aside{width:680px}
  .code{box-sizing:border-box;height:98px;padding-top:12px;border:solid #979797;border-width:0 4px 4px;background:#a3a3a3;text-align:center;font-size:36px;line-height:76px;font-weight:700;color:#7c7c7c}
  button{all:unset;box-sizing:border-box;display:flex;align-items:center;justify-content:center;gap:10px;width:100%;height:72px;margin-top:10px;padding-bottom:2px;border:2px solid #8f8f8f;border-radius:6px;font-size:25px;font-weight:700;letter-spacing:2px;color:#8c8c8c}
</style>
<div><article>
<p>solving and social emotional learning.&nbsp; The specific strategic learning goals are:<br>ITL1.3: Provide teachers with choices of professional development options that will enhance their ability to<br>design and implement complex,<br>thinking, problem solving skills a<br>ITL1.4: Utilize technology and in<br>opportunities for staff and stude</p>
<p>&nbsp;Professional Learning systems<br>improve professional practice an<br>financial and calendar constraint</p>
<p>&nbsp;In the digital age, we can add in<br>on outputs (evidence of applicat<br>application of professional learn<br>artifacts.</p>
</article>
<dl>
<meta-row><ui-icon slot="icon" name="eye"></ui-icon><span slot="label">VISIBILITY:</span>Shared with specific users</meta-row>
<meta-row><ui-icon slot="icon" name="pin"></ui-icon><span slot="label">LOCATION:</span>AHS Auditorium</meta-row>
<meta-row><ui-icon slot="icon" name="person"></ui-icon><span slot="label">FACILITATOR:</span>Christopher McGee</meta-row>
<meta-row><ui-icon slot="icon" name="tags"></ui-icon><span slot="label">AUDIENCE:</span>All</meta-row>
<meta-row><ui-icon slot="icon" name="tags"></ui-icon><span slot="label">TYPE:</span>Strand-Specific PD</meta-row>
<meta-row><ui-icon slot="icon" name="tags"></ui-icon><span slot="label">SERIES:</span>Strand PD: 2 of 4</meta-row>
</dl></div>
<aside><div class="code">HDB5GJ</div><button>ADD TO CALENDAR <ui-icon name="chevron"></ui-icon></button></aside>`);

define('event-attendance', `
<style>
  :host{display:block;box-sizing:border-box;height:490px;margin-top:56px;background:#a6a6a6;border:2px solid #a3a3a3;border-top:6px solid #84978d;border-bottom:4px solid #9c9c9c;padding:50px 40px 0;color:#7a7a7a}
  header{display:flex;align-items:center;gap:10px}
  header > ui-icon{color:#84978d;--tick:#a9aba9}
  h2{flex:1;margin:0;padding-bottom:2px;font-size:40px;line-height:50px;font-weight:900}
  header button{all:unset;margin-right:24px}
  label{display:block;margin:42px 6px 8px;font-size:25px;line-height:36px;font-weight:700;letter-spacing:2px;color:#7b8f99}
  .search{display:flex;align-items:center;gap:12px;height:58px;border:4px solid #a3a3a3;padding:0 18px 2px;font-size:29px}
  input{all:unset;flex:1;font-size:29px;line-height:36px}
  input::placeholder{color:#8d8d8d}
  table{width:100%;margin-top:30px;border-collapse:collapse;table-layout:fixed;font-size:32px;line-height:40px;text-align:left}
  th,td{box-sizing:border-box;padding:0 16px;border-bottom:2px solid #9d9d9d;font-weight:700}
  th{height:68px;font-size:33px}
  td{height:86px;padding-left:20px;font-weight:300;color:#707070}
  .n{width:35.400%}.e{width:33.700%}.c{width:10.400%}
</style>
<header><ui-icon name="disc"></ui-icon><h2>Event Attendance</h2><button aria-label="More"><ui-icon name="dots"></ui-icon></button></header>
<label for="q">ADD ATTENDEES</label>
<div class="search"><ui-icon name="lens"></ui-icon><input id="q" type="text" placeholder="Search"></div>
<table><thead><tr><th class="n">Name</th><th class="e">Email</th><th class="c">Confirmed</th><th>Attendance</th></tr></thead><tbody><tr><td colspan="4">There are no users registered for this event.</td></tr></tbody></table>`);

define('bulk-dialog', `
<style>
  :host{display:block;box-sizing:border-box;width:1200px;max-width:90%;background:#fff;border:2px solid #ddd;border-top:6px solid #337c9e;border-bottom:4px solid #ddd;border-radius:6px;box-shadow:0 10px 44px rgba(0,0,0,.62);color:#333}
  .body{padding:40px 40px 30px}
  header{display:flex;align-items:center;gap:10px}
  header ui-icon{color:#337c9e}
  h2{flex:1;margin:0;padding-bottom:2px;font-size:40px;line-height:50px;font-weight:900}
  .close{all:unset;align-self:flex-start;display:flex;margin:-2px 4px 0 0}
  .close ui-icon{color:#666}
  label{display:block;margin:28px 6px 6px;font-size:25px;line-height:36px;font-weight:700;letter-spacing:2px;color:#337c9e}
  .field{position:relative}
  textarea{display:block;box-sizing:border-box;width:100%;height:238px;border:4px solid #ddd;border-radius:4px;background:#fff;resize:none;font:28px Lato,sans-serif;padding:12px;outline:none}
  .field ui-icon{position:absolute;right:5px;bottom:5px}
  footer{border-top:4px solid #ddd;background:#eee;padding:30px 40px}
  footer button{all:unset;box-sizing:border-box;width:100%;height:68px;padding-bottom:2px;border-radius:6px;background:#337c9e;color:#fff;text-align:center;font-size:25px;line-height:66px;font-weight:700;letter-spacing:2px}
</style>
<div class="body"><header><ui-icon name="disc"></ui-icon><h2>Bulk Register Attendance</h2><button class="close" aria-label="Close"><ui-icon name="dismiss"></ui-icon></button></header>
<label for="emails">ADD ATTENDEES' EMAILS SEPARATED BY COMMAS</label>
<div class="field"><textarea id="emails"></textarea><ui-icon name="grip"></ui-icon></div></div>
<footer><button>ADD ATTENDEES</button></footer>`);

define('chat-launcher', `
<style>:host{display:block}button{all:unset;display:flex;align-items:center;justify-content:center;width:120px;height:120px;border-radius:50%;background:#337c9e;box-shadow:0 4px 60px rgba(0,0,0,.14),0 2px 12px rgba(0,0,0,.1)}</style>
<button aria-label="Open chat"><ui-icon name="chat"></ui-icon></button>`);

define('event-page', `
<style>
  :host{display:block;position:relative;overflow:hidden;background:#a2a2a2;font-family:Lato,"Open Sans",sans-serif}
  main{width:2360px;max-width:100%;margin:-24px auto 0}
  .overlay{position:absolute;inset:0;display:flex;justify-content:center;align-items:flex-start;padding-top:60px}
  chat-launcher{position:absolute;right:38px;bottom:38px}
</style>
<main><event-details></event-details><event-attendance></event-attendance></main>
<div class="overlay" role="dialog" aria-modal="true"><bulk-dialog></bulk-dialog></div>
<chat-launcher></chat-launcher>`);

define('browser-window', `
<style>
  :host{display:flex;flex-direction:column;min-height:0;border-radius:10px;overflow:hidden;border-top:2px solid #696c6c;box-sizing:border-box;box-shadow:0 20px 60px rgba(0,0,0,.7);position:relative}
  event-page{flex:1;min-height:0;border:2px solid #b4b6b4;border-top:0;border-radius:0 0 10px 10px;margin:0}
</style><tab-strip></tab-strip><address-bar></address-bar><bookmark-bar></bookmark-bar><event-page></event-page>`);

define('dock-item', `
<style>
  :host{display:flex;flex-direction:column;align-items:center;width:116px;position:relative}
  button{all:unset;display:flex;width:100px;height:100px;justify-content:center}
  :host([running])::after{content:"";width:8px;height:8px;margin-top:12px;border-radius:50%;background:#f4e4ee;opacity:.9}
  b{position:absolute;top:-4px;right:0;width:42px;height:42px;border-radius:50%;background:#e24b3c;color:#fff;font-size:24px;font-weight:400;line-height:42px;text-align:center}
</style><button></button>`, (el, root) => {
  const button = root.querySelector('button');
  button.innerHTML = `<ui-icon name="${el.getAttribute('icon')}"></ui-icon>`;
  button.setAttribute('aria-label', el.getAttribute('icon'));
  if (el.hasAttribute('badge')) { const b = document.createElement('b'); b.textContent = el.getAttribute('badge'); root.append(b); }
});

define('mac-dock', `
<style>
  :host{display:flex;box-sizing:border-box;height:140px;padding:14px 7px 0;border:solid rgba(255,255,255,.22);border-width:2px 1px 0;border-radius:10px 10px 0 0;position:relative;box-shadow:0 0 120px rgba(0,0,0,.16);
  background:linear-gradient(180deg,rgba(0,0,0,.22),rgba(0,0,0,0) 70%,rgba(255,255,255,.1)),linear-gradient(90deg,#332a62 0,#382f69 7%,#2e244f 13%,#4a3443 16%,#74524f 20%,#875e5b 28%,#936968 36%,#957478 52%,#988085 70%,#98919b 84%,#9a95a6 100%)}
  i{width:2px;margin:0 25px;background:rgba(230,215,220,.6)}
  .a{height:68px;margin-top:20px}
  .b{height:104px;margin-top:2px}
</style>
<dock-item icon="finder" running></dock-item><dock-item icon="palms" running></dock-item><dock-item icon="chrome" running></dock-item><dock-item icon="figma" running></dock-item><dock-item icon="atom" running></dock-item><dock-item icon="vscode"></dock-item><dock-item icon="terminal" running></dock-item><dock-item icon="slack"></dock-item><dock-item icon="spotify" running></dock-item><dock-item icon="messages"></dock-item><dock-item icon="prefs"></dock-item>
<i class="a"></i><dock-item icon="atom"></dock-item><dock-item icon="atom"></dock-item><dock-item icon="facetime" badge="2"></dock-item>
<i class="b"></i><dock-item icon="folderApps"></dock-item><dock-item icon="folderDown"></dock-item><dock-item icon="thumbFinder"></dock-item><dock-item icon="thumbChrome"></dock-item><dock-item icon="thumbAtom"></dock-item><dock-item icon="trash"></dock-item>`);

define('desktop-wallpaper', `
<style>:host{position:absolute;left:0;right:0;bottom:0;height:180px;display:block}svg{display:block;width:100%;height:100%}</style>
<svg viewBox="0 0 3360 180" preserveAspectRatio="none" aria-hidden="true">
<defs><linearGradient id="w"><stop offset="0" stop-color="#b9b4c2"/><stop offset=".35" stop-color="#e6e2f0"/><stop offset=".75" stop-color="#e4d9f1"/><stop offset="1" stop-color="#d2b9ea"/></linearGradient><linearGradient id="s" x1="0" y1="0" x2="0" y2="1"><stop offset=".2" stop-color="#000" stop-opacity=".75"/><stop offset=".75" stop-color="#000" stop-opacity="0"/></linearGradient>
<filter id="f1" x="-20%" y="-60%" width="140%" height="220%"><feGaussianBlur stdDeviation="14"/></filter><filter id="f2" x="-20%" y="-60%" width="140%" height="220%"><feGaussianBlur stdDeviation="3"/></filter></defs>
<rect width="3360" height="180" fill="#0a0716"/>
<g filter="url(#f1)"><path d="M0 190V150Q40 130 110 160L125 190Z" fill="#6a3a58"/><path d="M40 130Q110 60 200 80L90 150Z" fill="#1c1440"/><path d="M140 190Q160 130 240 130T330 120L310 190Z" fill="#4a2a5c"/><path d="M160 150Q200 125 270 130L200 175Z" fill="#94586c"/><path d="M380 190 470 130V190Z" fill="#2c2158"/></g>
<g filter="url(#f2)" fill="none" stroke-linecap="round"><path d="M-10 92Q60 50 110 40" stroke="#3b2668" stroke-width="16"/><path d="M136 186Q145 150 180 134 240 150 300 118 345 80 400 82L470 58" stroke="#4a2f96" stroke-width="13"/><path d="M180 130 190 104 210 114 225 106 230 128Z" fill="#8a4aa0" stroke="#6b3ba0" stroke-width="4"/><path d="M360 92Q390 78 410 80L466 58" stroke="#874aa0" stroke-width="4"/><path d="M140 186Q150 150 185 138" stroke="#a866b6" stroke-width="5"/></g>
<rect x="2890" width="470" height="180" fill="url(#w)"/><path d="M2890 0H3360V180H2890Z" fill="url(#s)"/>
<g filter="url(#f2)"><path d="M3040 30Q3180 110 3330 184" fill="none" stroke="#8a549f" stroke-width="7" opacity=".75"/><path d="M2900 130 3000 180" stroke="#c2aac4" stroke-width="5" opacity=".5"/></g></svg>`);

define('desktop-screen', `
<style>
  :host{display:flex;flex-direction:column;height:100vh;position:relative;overflow:hidden}
  browser-window{flex:1;z-index:1}
  mac-dock{align-self:center;z-index:2}
</style><desktop-wallpaper></desktop-wallpaper><mac-menubar></mac-menubar><browser-window></browser-window><mac-dock></mac-dock>`);
</script>
</body>
</html>
